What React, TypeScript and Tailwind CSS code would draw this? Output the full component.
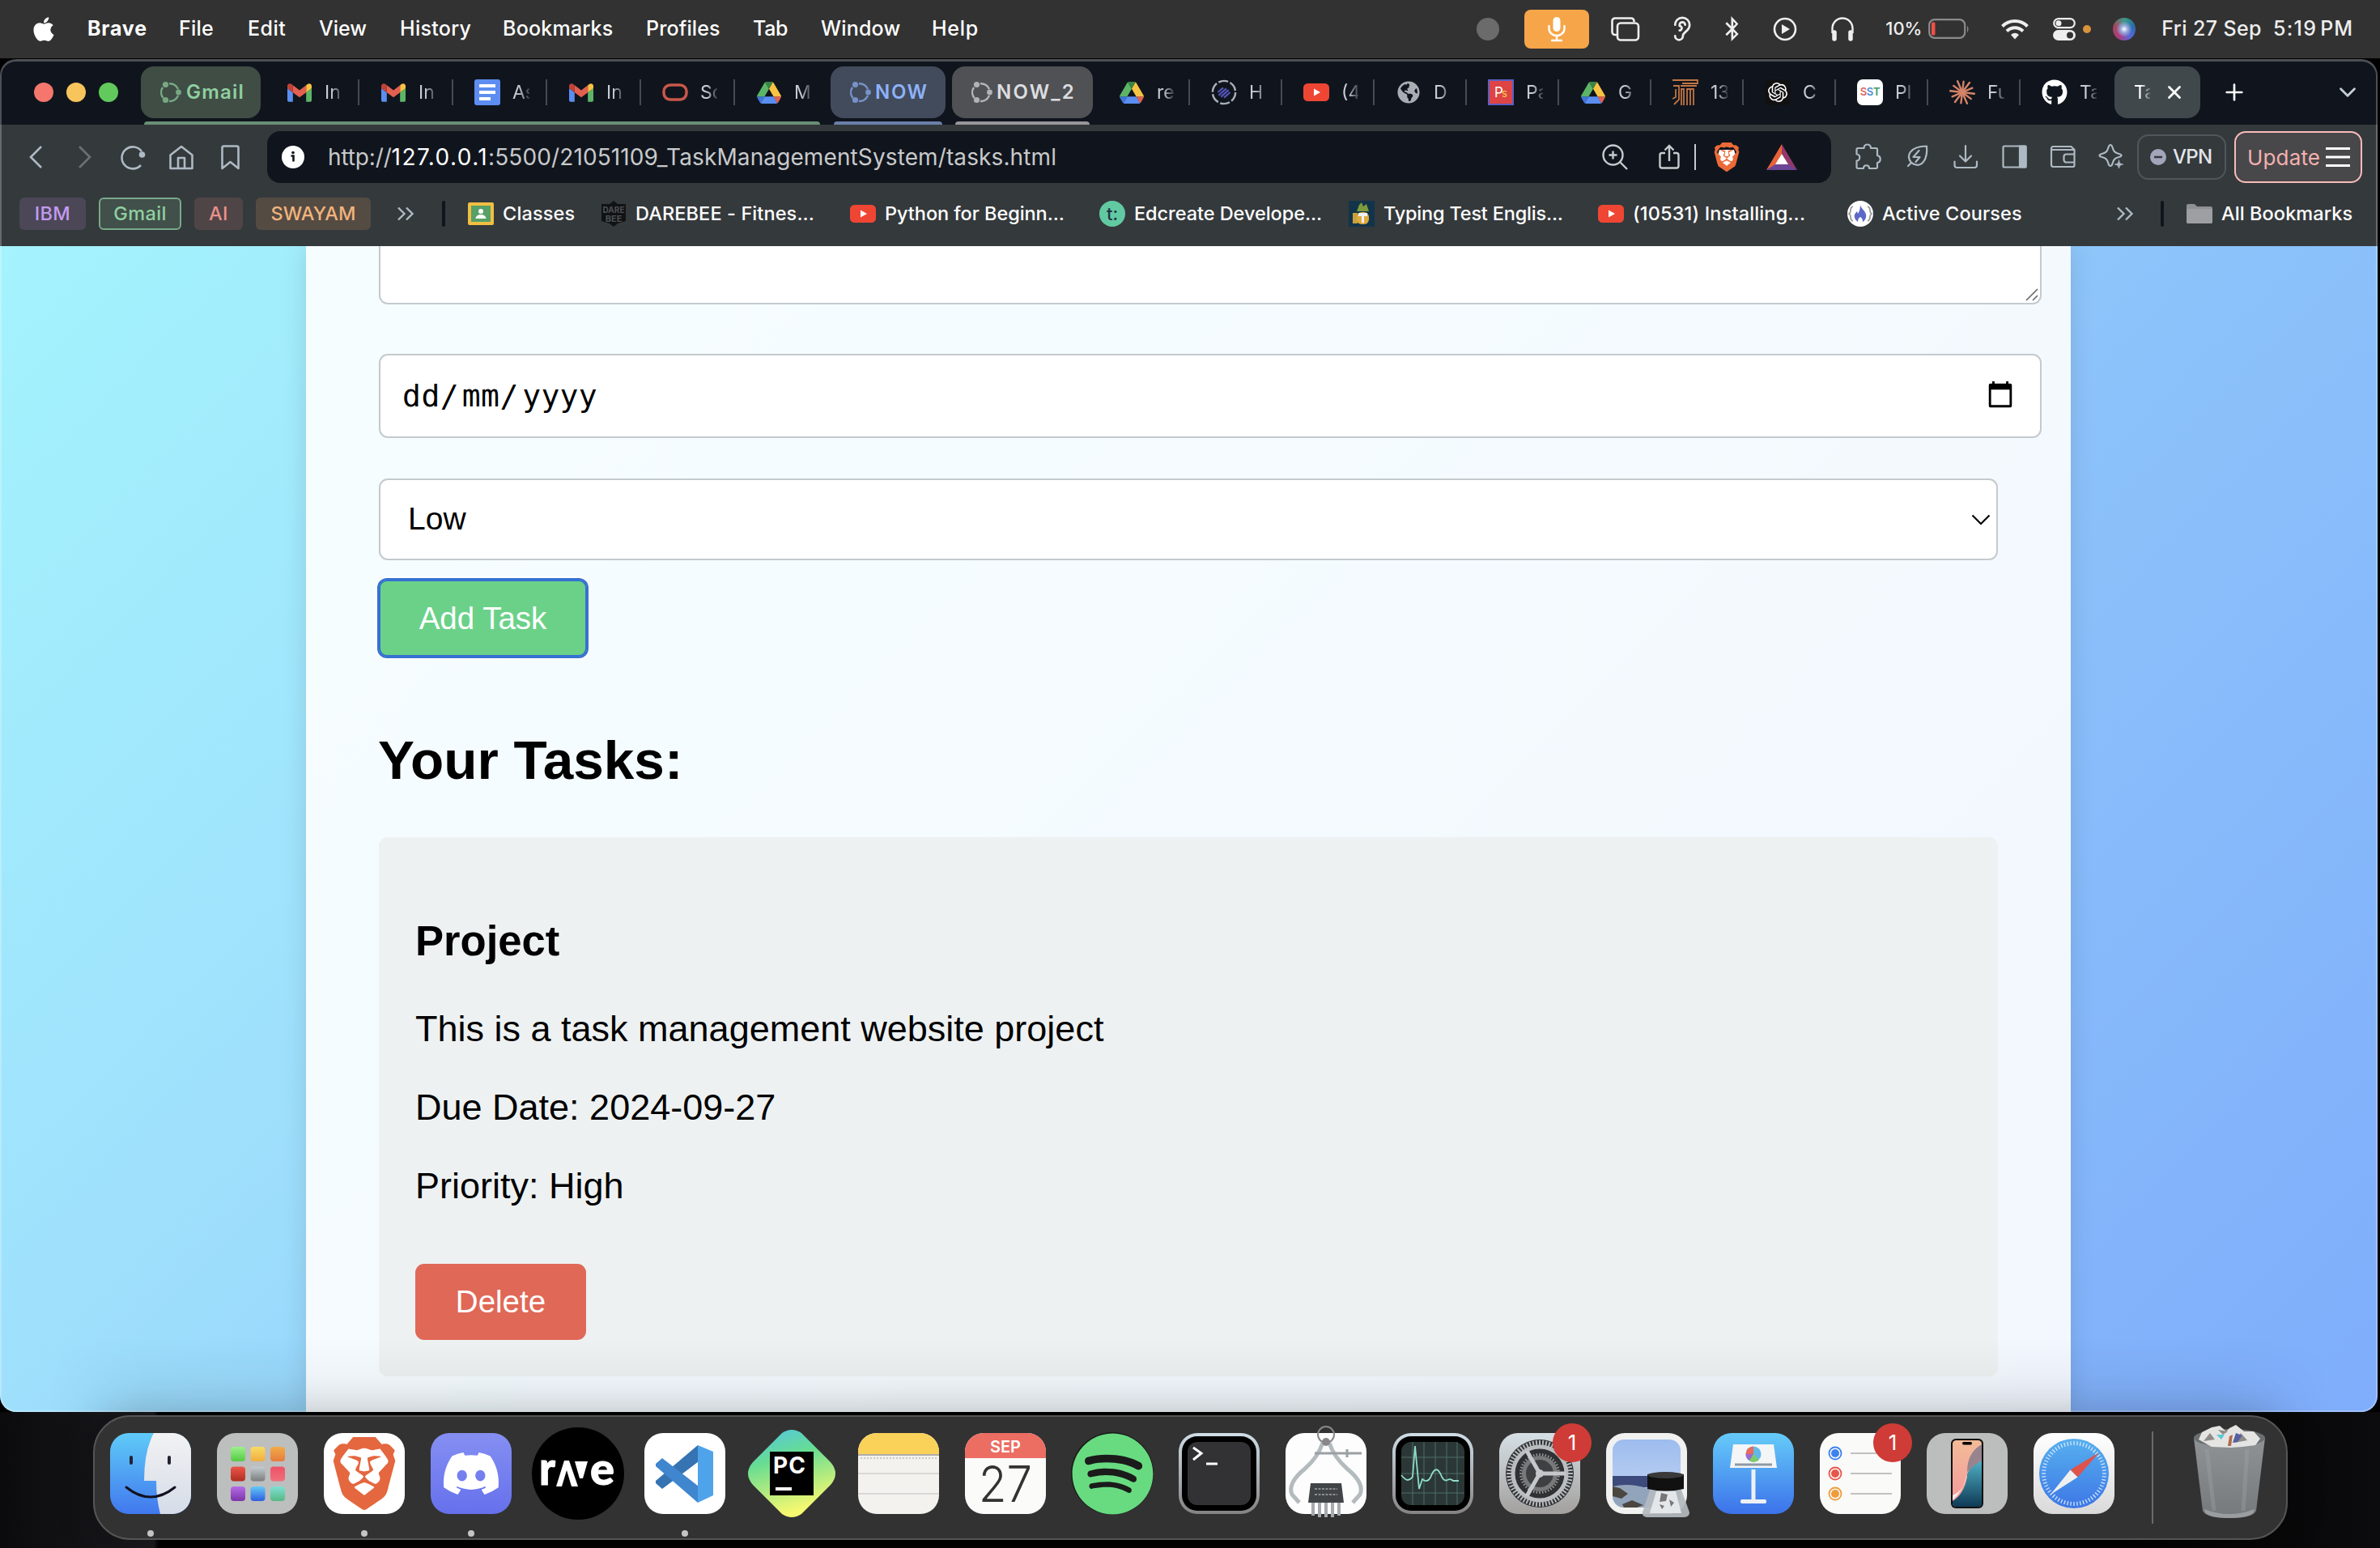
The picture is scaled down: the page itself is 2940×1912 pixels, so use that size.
import React, { useLayoutEffect, useRef, useState } from "react";
import { ChevronDown, Ear, Plus, X } from "lucide-react";
import { FaApple, FaBluetoothB, FaDiscord, FaGithub, FaGlobeAmericas, FaSpotify } from "react-icons/fa";
import { SiBrave, SiOpenai } from "react-icons/si";

/* Text whose letter spacing is adjusted so that it fills a given width. */
function Fit({ w, children, className = "" }: { w: number; children: string; className?: string }) {
  const ref = useRef<HTMLSpanElement>(null);
  const [spacing, setSpacing] = useState(0);
  useLayoutEffect(() => {
    if (ref.current) setSpacing((w - ref.current.offsetWidth) / children.length);
  }, [w, children]);
  return (
    <span ref={ref} className={`inline-block shrink-0 whitespace-pre ${className}`} style={{ letterSpacing: spacing }}>
      {children}
    </span>
  );
}

/* ---------- Menu bar ---------- */

const menus: [string, number, string][] = [
  ["File", 43, "w-[85px]"],
  ["Edit", 47, "w-[88px]"],
  ["View", 59, "w-[100px]"],
  ["History", 88, "w-[127px]"],
  ["Bookmarks", 137, "w-[177px]"],
  ["Profiles", 92, "w-[132px]"],
  ["Tab", 43, "w-[84px]"],
  ["Window", 98, "w-[137px]"],
  ["Help", 58, "w-[70px]"],
];

function MenuBar() {
  return (
    <header className="flex h-[72px] shrink-0 items-center bg-[#323232] pb-px pl-[38px] text-[25px] font-medium text-white">
      <div className="flex w-[70px] items-center"><FaApple className="h-[34px] w-[32px]" /></div>
      <div className="w-[113px] font-bold"><Fit w={74}>Brave</Fit></div>
      {menus.map(([t, w, c]) => (
        <div key={t} className={c}><Fit w={w}>{t}</Fit></div>
      ))}
      <div className="ml-auto flex items-center pr-[33px] text-[#eee]">
        <div className="w-[59px]"><div className="size-[28px] rounded-full bg-[#6b6b6b]" /></div>
        <div className="flex h-[48px] w-[80px] items-center justify-center rounded-[8px] bg-[#f6a548]">
          <svg width="24" height="32" viewBox="0 0 24 32" fill="none" stroke="#fff" strokeWidth="2.4" strokeLinecap="round">
            <rect x="7.500" y="1" width="9" height="18" rx="4.500" fill="#fff" stroke="none" />
            <path d="M2.500 12v3.500a9.5 8.500 0 0 0 19 0V12M12 24v5M6 30h12" />
          </svg>
        </div>
        <div className="flex w-[89px] justify-center">
          <svg width="36" height="30" viewBox="0 0 36 30" fill="none" stroke="#eee" strokeWidth="2.6">
            <path d="M7.500 22H5a3.500 3.500 0 0 1-3.500-3.500V5A3.500 3.500 0 0 1 5 1.500h20A3.500 3.500 0 0 1 28.500 5v1" />
            <rect x="8" y="7.500" width="26" height="21" rx="4" />
          </svg>
        </div>
        <div className="flex w-[50px] justify-center"><Ear size={33} strokeWidth={2} /></div>
        <div className="flex w-[75px] justify-center"><FaBluetoothB size={31} /></div>
        <div className="flex w-[56px] justify-center">
          <svg width="30" height="30" viewBox="0 0 30 30"><circle cx="15" cy="15" r="13" fill="none" stroke="#eee" strokeWidth="2.600" /><path d="M11 9l10 6-10 6z" fill="#eee" /></svg>
        </div>
        <div className="flex w-[96px] justify-center pr-[10px]">
          <svg width="30" height="30" viewBox="0 0 30 30" fill="none" stroke="#eee">
            <path d="M2.500 20v-6a12.500 12.500 0 0 1 25 0v6" strokeWidth="2.400" />
            <path d="M5 19v8M25 19v8" strokeWidth="5.500" strokeLinecap="round" />
          </svg>
        </div>
        <div className="w-[53px] text-[22px]"><Fit w={45}>10%</Fit></div>
        <div className="w-[89px]">
          <svg width="52" height="26" viewBox="0 0 52 26"><rect x="1.200" y="1.200" width="44" height="22.600" rx="6.500" fill="none" stroke="#8b8b8b" strokeWidth="2.200" /><rect x="4" y="4.500" width="4.500" height="16" rx="1.500" fill="#f04f45" /><path d="M48 8.500q3 4.500 0 9z" fill="#8b8b8b" /></svg>
        </div>
        <div className="w-[65px]">
          <svg width="36" height="26" viewBox="0 0 36 26" fill="none" stroke="#eee" strokeWidth="4">
            <path d="M2.500 9.500a22 22 0 0 1 31 0M8 15.500a14 14 0 0 1 20 0" /><path d="M18 25.500l-5-5.500q5-4.500 10 0z" fill="#eee" stroke="none" />
          </svg>
        </div>
        <div className="flex w-[74px] items-center gap-[9px]">
          <svg width="28" height="28" viewBox="0 0 28 28"><rect x="1.200" y="1.200" width="25.600" height="11" rx="5.500" fill="none" stroke="#eee" strokeWidth="2.200" /><circle cx="7" cy="6.700" r="3.500" fill="#eee" /><rect y="15" width="28" height="13" rx="6.500" fill="#eee" /><circle cx="21" cy="21.500" r="4" fill="#323232" /></svg>
          <div className="size-[10px] rounded-full bg-[#d8933c]" />
        </div>
        <div className="w-[60px]"><div className="size-[28px] rounded-full bg-[radial-gradient(circle_at_50%_50%,#fff_0%,#9ad_22%,transparent_50%),conic-gradient(#3a9a86,#2a6cae,#5a67d8,#b03a7a,#a4485f,#3a9a86)]" /></div>
        <Fit w={124}>Fri 27 Sep</Fit>
        <div className="w-[14px]" />
        <Fit w={54}>5:19</Fit>
        <Fit w={41} className="ml-[4px]">PM</Fit>
      </div>
    </header>
  );
}

/* ---------- Favicons ---------- */

const Gmail = () => (
  <svg width="30" height="23" viewBox="52 42 88 66">
    <path fill="#5a8ef0" d="M58 108h14V74L52 59v43c0 3.320 2.690 6 6 6" /><path fill="#5cb567" d="M120 108h14c3.320 0 6-2.690 6-6V59l-20 15" />
    <path fill="#f8c344" d="M120 48v26l20-15v-8c0-7.420-8.470-11.650-14.400-7.200" /><path fill="#e2604f" d="M72 74V48l24 18 24-18v26L96 92" />
    <path fill="#c04338" d="M52 51v8l20 15V48l-5.600-4.200c-5.940-4.450-14.400-.220-14.400 7.200" />
  </svg>
);
const Docs = () => (
  <svg width="32" height="32" viewBox="0 0 32 32"><rect width="32" height="32" rx="3" fill="#5d8df0" /><path d="M6 8h20M6 16h20M6 24h14" stroke="#fff" strokeWidth="4" /></svg>
);
const Oracle = () => (
  <svg width="32" height="24" viewBox="0 0 32 24"><rect x="2" y="3" width="28" height="18" rx="8" fill="none" stroke="#c9574a" strokeWidth="3.500" /></svg>
);
const Drive = () => (
  <svg width="30" height="27" viewBox="0 0 87.300 78">
    <path d="m6.600 66.850 3.850 6.650c.8 1.400 1.950 2.500 3.300 3.300l13.750-23.800h-27.500c0 1.550.4 3.100 1.200 4.500z" fill="#3f74dc" />
    <path d="m43.650 25-13.750-23.800c-1.350.8-2.500 1.900-3.300 3.300l-25.400 44a9.060 9.060 0 0 0-1.200 4.500h27.500z" fill="#5cb567" />
    <path d="m73.550 76.800c1.350-.8 2.500-1.900 3.300-3.300l1.600-2.750 7.650-13.250c.8-1.400 1.200-2.950 1.200-4.500h-27.500l5.850 11.500z" fill="#e2604f" />
    <path d="m43.650 25 13.750-23.800c-1.350-.8-2.900-1.200-4.500-1.200h-18.500c-1.600 0-3.150.45-4.500 1.200z" fill="#3a8544" />
    <path d="m59.800 53h-32.300l-13.750 23.800c1.350.8 2.900 1.200 4.500 1.200h50.800c1.600 0 3.150-.45 4.500-1.200z" fill="#5a8ef0" />
    <path d="m73.400 26.500-12.700-22c-.8-1.400-1.950-2.500-3.300-3.300l-13.750 23.800 16.150 28h27.450c0-1.550-.4-3.100-1.200-4.500z" fill="#f8c344" />
  </svg>
);
const YouTube = () => (
  <svg width="32" height="24" viewBox="0 0 32 24"><rect y="1" width="32" height="22" rx="5.500" fill="#ef4634" /><path d="M13 7.500l8 4.500-8 4.500z" fill="#fff" /></svg>
);
const Hashed = () => (
  <svg width="32" height="32" viewBox="0 0 34 34" fill="none"><circle cx="17" cy="17" r="15" stroke="#a9afb8" strokeWidth="2.600" strokeDasharray="12.900 2.800" /><path d="M9 17l7-6M10 21l10-9M13 23l10-9M17 24l8-7" stroke="#5355b8" strokeWidth="2.400" /></svg>
);
const Ps = () => (
  <svg width="32" height="32" viewBox="0 0 32 32"><rect x="1" y="1" width="30" height="30" fill="#df4444" stroke="#5a5fc4" strokeWidth="2" /><text x="8" y="22" fontSize="17" fontFamily="Inter" fill="#fff">P</text><text x="17" y="22" fontSize="13" fontFamily="Inter" fill="#f5d34c">s</text></svg>
);
const ItMark = () => (
  <svg width="32" height="32" viewBox="0 0 32 32" fill="none" stroke="#c07445" strokeWidth="1.800"><path d="M0 1h31v4H12M1 8h7v17l-6 6M4 12v10l-4 2M10 8h20M14 32V12h-3v20M18 32V12h8v20M22 32V12" /></svg>
);
const OpenAi = () => (
  <div className="flex size-[32px] items-center justify-center rounded-[7px] bg-[#111]"><SiOpenai size={24} color="#fff" /></div>
);
const Sst = () => (
  <div className="flex size-[32px] items-center justify-center rounded-[7px] bg-white text-[13px] font-semibold tracking-tight">
    <span className="text-[#e06666]">S</span><span className="text-[#4a8fd6]">S</span><span className="text-[#3d9a63]">T</span>
  </div>
);
const Burst = () => (
  <svg width="32" height="32" viewBox="0 0 32 32" stroke="#d58468" strokeWidth="2.400" strokeLinecap="round">
    {Array.from({ length: 12 }, (_, i) => {
      const a = (i * Math.PI) / 6 + 0.12;
      const r = i % 2 ? 13.5 : 15;
      return <line key={i} x1="16" y1="16" x2={16 + r * Math.cos(a)} y2={16 + r * Math.sin(a)} />;
    })}
  </svg>
);

/* ---------- Tab strip ---------- */

const leftTabs: [() => React.ReactElement, string][] = [
  [Gmail, "In"], [Gmail, "In"], [Docs, "As"], [Gmail, "In"], [Oracle, "So"], [Drive, "M"],
];
const rightTabs: [() => React.ReactElement, string][] = [
  [Drive, "re"], [Hashed, "H"], [YouTube, "(4"], [() => <FaGlobeAmericas size={28} color="#a9adb3" />, "D"], [Ps, "Pa"], [Drive, "G"],
  [ItMark, "13"], [OpenAi, "C"], [Sst, "Pl"], [Burst, "Fu"], [() => <FaGithub size={32} color="#fff" />, "Ta"],
];

const Label = ({ children }: { children: string }) => (
  <span className="ml-[15px] w-[21px] shrink-0 overflow-hidden text-[23px] whitespace-nowrap text-[#c9cdd2] [mask-image:linear-gradient(to_right,#000_40%,#0003)]">{children}</span>
);

const GroupRing = () => (
  <svg className="shrink-0" width="26" height="28" viewBox="0 0 26 28" fill="none" stroke="currentColor" strokeWidth="2.400" opacity="0.700">
    <path d="M3.500 21A11 11 0 0 1 3 8M11 3.200A11.500 11.500 0 0 1 22 10M22 18A11.500 11.500 0 0 1 11 25" />
    <g fill="currentColor" stroke="none"><circle cx="6.500" cy="4.500" r="3.600" /><circle cx="22.500" cy="14" r="3.400" /><circle cx="6.500" cy="23.500" r="3.600" /></g>
  </svg>
);

function TabStrip() {
  return (
    <div className="flex h-[81px] shrink-0 bg-[#10151d] pt-[3px] pl-[42px]">
      <div className="mt-[26px] flex h-[24px] w-[132px] shrink-0 gap-[16px]">
        <div className="size-[24px] rounded-full bg-[#f4766d]" />
        <div className="size-[24px] rounded-full bg-[#f8c55c]" />
        <div className="size-[24px] rounded-full bg-[#62c95c]" />
      </div>
      <div className="mr-[12px] flex w-[840px] shrink-0 flex-col">
        <div className="mt-[6px] flex h-[64px] w-[880px] items-center">
          <div className="mr-[32px] flex h-[64px] w-[148px] shrink-0 items-center rounded-[16px] bg-[#3f4d45] pl-[24px] text-[24px] font-semibold text-[#8fcf9f]">
            <GroupRing /><Fit w={72} className="ml-[6px]">Gmail</Fit>
          </div>
          {leftTabs.map(([Icon, t], i) => (
            <div key={i} className="flex w-[116px] shrink-0 items-center">
              <div className="flex w-[32px] shrink-0 justify-center"><Icon /></div>
              <Label>{t}</Label>
              {i < 5 && <div className="ml-[20px] h-[32px] w-[2px] bg-[#454b53]" />}
            </div>
          ))}
        </div>
        <div className="mt-[4px] ml-[4px] h-[4px] w-[835px] rounded-t-[4px] bg-[#6a8f76]" />
      </div>
      <div className="mr-[8px] flex w-[142px] shrink-0 flex-col items-center">
        <div className="mt-[6px] flex h-[64px] w-[142px] items-center rounded-[16px] bg-[#414b5c] pl-[24px] text-[24px] font-semibold text-[#8eb1f7]">
          <GroupRing /><Fit w={66} className="ml-[5px]">NOW</Fit>
        </div>
        <div className="mt-[4px] h-[4px] w-[134px] rounded-t-[4px] bg-[#6b7fa9]" />
      </div>
      <div className="mr-[32px] flex w-[174px] shrink-0 flex-col items-center">
        <div className="mt-[6px] flex h-[64px] w-[174px] items-center rounded-[16px] bg-[#505154] pl-[24px] text-[24px] font-semibold text-[#dcdde0]">
          <GroupRing /><Fit w={98} className="ml-[5px]">NOW_2</Fit>
        </div>
        <div className="mt-[4px] h-[4px] w-[166px] rounded-t-[4px] bg-[#98969a]" />
      </div>
      <div className="mt-[6px] flex h-[64px] items-center">
        {rightTabs.map(([Icon, t], i) => (
          <div key={i} className={i < 10 ? "flex w-[114px] items-center" : "flex w-[90px] items-center"}>
            <div className="flex w-[32px] shrink-0 justify-center"><Icon /></div>
            <Label>{t}</Label>
            {i < 10 && <div className="ml-[18px] h-[32px] w-[2px] bg-[#454b53]" />}
          </div>
        ))}
        <div className="flex h-[64px] w-[106px] items-center rounded-[16px] bg-[#40484b] pl-[24px]">
          <span className="w-[20px] overflow-hidden text-[23px] text-white [mask-image:linear-gradient(to_right,#000_40%,#0003)]">Ta</span>
          <X size={26} strokeWidth={2.6} className="ml-[17px] text-white" />
        </div>
        <Plus size={32} strokeWidth={2} className="ml-[26px] text-white" />
        <ChevronDown size={34} strokeWidth={2} className="ml-[107px] text-[#c4cdd4]" />
      </div>
    </div>
  );
}

/* ---------- Toolbar ---------- */

function Toolbar() {
  return (
    <div className="flex h-[80px] shrink-0 items-center bg-[#34393c] text-[#aebac3]">
      <svg width="330" height="40" viewBox="0 0 330 40" fill="none" stroke="#aebac3" strokeWidth="2.600">
        <path d="M51 7L38 20l13 13" />
        <path d="M98 7l13 13-13 13" stroke="#6a7175" />
        <path d="M175 13A13.500 13.500 0 1 0 174 30" /><circle cx="175.500" cy="17" r="3.800" fill="#aebac3" stroke="none" />
        <path d="M210.500 17.500L224 7l13.500 10.500V34h-27zM220 34V21h8v13" strokeLinejoin="round" />
        <path d="M274.500 34V8.500a2 2 0 0 1 2-2h16a2 2 0 0 1 2 2V34l-10-8z" strokeLinejoin="round" />
      </svg>
      <div className="flex h-[64px] w-[1932px] shrink-0 items-center rounded-[16px] bg-[#10151d] pl-[18px]">
        <svg width="28" height="28" viewBox="0 0 28 28"><circle cx="14" cy="14" r="14" fill="#fff" /><circle cx="14" cy="8.500" r="1.800" fill="#10151d" /><path d="M11.500 12.500h3v7" stroke="#10151d" strokeWidth="2.600" fill="none" /></svg>
        <div className="ml-[29px] flex text-[28px] text-[#c8c9cb]">
          <Fit w={79}>http://</Fit><Fit w={119} className="text-white">127.0.0.1</Fit><Fit w={702}>:5500/21051109_TaskManagementSystem/tasks.html</Fit>
        </div>
        <div className="ml-auto flex items-center pr-[42px]">
          <svg width="32" height="32" viewBox="0 0 32 32" fill="none" stroke="#c8cbce" strokeWidth="2.400"><circle cx="13.500" cy="13.500" r="12" /><path d="M22 22l9 9M13.500 8.500v10M8.500 13.500h10" /></svg>
          <svg className="ml-[38px]" width="26" height="32" viewBox="0 0 26 32" fill="none" stroke="#c8cbce" strokeWidth="2.400"><path d="M8 11H4a2.500 2.500 0 0 0-2.500 2.500V27A2.500 2.500 0 0 0 4 29.500h18a2.500 2.500 0 0 0 2.500-2.500V13.500A2.500 2.500 0 0 0 22 11h-4M13 21V2M7.500 7.500L13 2l5.500 5.500" /></svg>
          <div className="ml-[18px] h-[32px] w-[2px] bg-[#c8cbce]" />
          <div className="ml-[22px] flex h-[36px] w-[32px] items-center justify-center"><BraveLion size={36} color="#ec6a37" /></div>
          <svg className="ml-[33px]" width="38" height="32" viewBox="0 0 38 32"><path d="M19 0L0 32l11-6 8-14z" fill="#e8623a" /><path d="M19 0l19 32-11-6-8-14z" fill="#93396b" /><path d="M0 32h38l-11-7H11z" fill="#6c4597" /><path d="M19 12l-8 13h16z" fill="#fff" /></svg>
        </div>
      </div>
      <svg className="shrink-0" width="378" height="70" viewBox="2262 160 378 70" fill="none" stroke="currentColor" strokeWidth="2.200" strokeLinejoin="round" strokeLinecap="round">
        <path d="M2295 184h7.500c0-6 8.500-6 8.500 0h6.500a1.500 1.500 0 0 1 1.500 1.500v7.500c5 1 5 8 0 9v5.500a1.500 1.500 0 0 1-1.500 1.500h-8.500c0-5-7-5-7 0h-7a1.500 1.500 0 0 1-1.500-1.500v-8c5 0 5-8 0-8v-6a1.500 1.500 0 0 1 1.500-1.500z" />
        <path d="M2357 206l4-4c-7-9-2-20 19-20.500 1.500 16-6 29-19 20.500M2370.500 187l-7 8h8l-5 6" />
        <path d="M2428 181v19.500M2421 193.500l7 7 7-7M2414.500 200.500v4.500a3 3 0 0 0 3 3h21.500a3 3 0 0 0 3-3v-4.500" />
        <rect x="2474.500" y="181.500" width="28" height="26" rx="1.500" /><path d="M2495 181.500h7.500v26h-7.500z" fill="currentColor" />
        <path d="M2562.500 191.500v-5.500l-4-4h-22a2.500 2.500 0 0 0-2.500 2.500v20a2.500 2.500 0 0 0 2.500 2.500h24a2 2 0 0 0 2-2v-13.500h-10a3 3 0 0 0-3 3v4a3 3 0 0 0 3 3h10M2535 186h27" />
        <path d="M2607 180c1.500 0 2 1 2.500 3 1.500 5 2.500 6.500 8 8 2 .5 3 1 3 2s-1 1.500-3 2c-5.500 1.500-6.500 3-8 8-.5 2-1 3-2.500 3s-2-1-2.500-3c-1.500-5-2.500-6.500-8-8-2-.5-3-1-3-2s1-1.500 3-2c5.500-1.500 6.500-3 8-8 .5-2 1-3 2.500-3z" />
        <path d="M2617.500 199c.5 3.500 1.500 4.500 5 5-3.500.5-4.500 1.500-5 5-.5-3.500-1.500-4.500-5-5 3.500-.5 4.500-1.500 5-5z" fill="currentColor" strokeWidth="1" />
      </svg>
      <div className="flex h-[56px] w-[110px] items-center rounded-[14px] border-2 border-[#4f575c] pl-[14px] text-[24px] font-medium text-[#e3e5e8]">
        <svg width="20" height="20" viewBox="0 0 20 20"><circle cx="10" cy="10" r="10" fill="#a3a5bb" /><path d="M5 10h10" stroke="#34393c" strokeWidth="2.500" /></svg>
        <Fit w={49} className="ml-[8px]">VPN</Fit>
      </div>
      <div className="ml-[10px] flex h-[64px] w-[158px] items-center rounded-[14px] border-2 border-[#f7bcba] bg-[#48474a] pl-[14px] text-[26px] text-[#f2b1ae]">
        <Fit w={90}>Update</Fit>
        <svg className="ml-[7px]" width="30" height="24" viewBox="0 0 30 24"><path d="M0 1.500h30M0 12h30M0 22.500h30" stroke="#fff" strokeWidth="2.800" /></svg>
      </div>
    </div>
  );
}

function BraveLion({ size, color }: { size: number; color: string }) {
  return (
    <span className="relative flex">
      <svg className="absolute inset-0" width={size} height={size} viewBox="0 0 24 24"><path d="M6 6h12l1.500 5-4 9-3.500 2-3.500-2-4-9z" fill="#fff" /></svg>
      <SiBrave className="relative" size={size} color={color} />
    </span>
  );
}

/* ---------- Bookmarks bar ---------- */

const marks: { icon: React.ReactElement; label: string; w: number; cell: string }[] = [
  { icon: <svg width="32" height="28" viewBox="0 0 32 28"><rect width="32" height="28" rx="2" fill="#f0bf42" /><rect x="4" y="4" width="24" height="20" fill="#57a068" /><circle cx="16" cy="11" r="3" fill="#fff" /><path d="M9.500 20a6.500 5 0 0 1 13 0z" fill="#fff" /></svg>, label: "Classes", w: 89, cell: "w-[164px]" },
  { icon: <svg width="32" height="32" viewBox="0 0 32 32"><path d="M16 0l5 4h10v21l-10 3-5 4-5-4-10-3V4h10z" fill="#101214" /><text x="16" y="15" textAnchor="middle" fontSize="11" fontWeight="700" fontFamily="Inter" fill="#4b5054" textLength="27" lengthAdjust="spacingAndGlyphs">DARE</text><text x="16" y="26" textAnchor="middle" fontSize="11" fontWeight="700" fontFamily="Inter" fill="#4b5054">BEE</text></svg>, label: "DAREBEE - Fitnes...", w: 221, cell: "w-[308px]" },
  { icon: <YouTube />, label: "Python for Beginn...", w: 222, cell: "w-[308px]" },
  { icon: <div className="flex size-[32px] items-center justify-center rounded-full bg-[#62caa2] text-[22px] text-[#234]">t:</div>, label: "Edcreate Develope...", w: 232, cell: "w-[308px]" },
  { icon: <svg width="32" height="32" viewBox="0 0 32 32"><rect width="32" height="32" fill="#12344a" /><path d="M10 13l3-8 3-3 2 5 4-3 3 9z" fill="#7d9b3c" /><path d="M5 15h6v13H5z" fill="#c9a13a" /><rect x="10" y="14" width="15" height="15" rx="6" fill="#e0aa3e" /><path d="M12 15h11v4h-4v8h-3v-8h-4z" fill="#eef2f6" /></svg>, label: "Typing Test Englis...", w: 222, cell: "w-[308px]" },
  { icon: <YouTube />, label: "(10531) Installing...", w: 213, cell: "w-[308px]" },
  { icon: <svg width="32" height="32" viewBox="0 0 32 32"><circle cx="16" cy="16" r="16" fill="#fff" /><path d="M7 7q-3 1-3 5 0 3-2 4 2 1 2 4 0 4 3 5M25 7q3 1 3 5 0 3 2 4-2 1-2 4 0 4-3 5" fill="none" stroke="#999" strokeWidth="1.800" /><path d="M16 5c1 5 6 7 7 12 1 4-2 8-4 9 0-3-1-5-3-6-2 1-3 3-3 6-3-2-5-5-4-9 1-2 2-3 3-4l1 3c2-3 3-6 3-11z" fill="#5b68c9" /></svg>, label: "Active Courses", w: 173, cell: "w-[330px]" },
];

function Bookmarks() {
  return (
    <div className="flex h-[70px] shrink-0 items-center bg-[#34393c] pb-[10px] pl-[24px] text-[23.500px] font-medium text-white">
      <div className="flex h-[40px] w-[82px] items-center justify-center rounded-[6px] bg-[#4b4757] text-[#c39af0]"><Fit w={44}>IBM</Fit></div>
      <div className="ml-[16px] flex h-[40px] w-[102px] items-center justify-center rounded-[6px] border-2 border-[#7aa88a] bg-[#41504a] text-[#8fcf9f]"><Fit w={66}>Gmail</Fit></div>
      <div className="ml-[16px] flex h-[40px] w-[60px] items-center justify-center rounded-[6px] bg-[#504546] text-[#e8918c]"><Fit w={24}>AI</Fit></div>
      <div className="ml-[16px] flex h-[40px] w-[142px] items-center justify-center rounded-[6px] bg-[#544b43] text-[#f0b47c]"><Fit w={105}>SWAYAM</Fit></div>
      <Chevrons className="ml-[32px]" />
      <div className="ml-[34px] h-[32px] w-[4px] rounded-full bg-[#10151d]" />
      <div className="ml-[28px] flex">
        {marks.map((m) => (
          <div key={m.label} className={`flex items-center ${m.cell}`}>{m.icon}<Fit w={m.w} className="ml-[11px]">{m.label}</Fit></div>
        ))}
      </div>
      <Chevrons className="ml-[2px]" />
      <div className="ml-[33px] h-[32px] w-[4px] rounded-full bg-[#10151d]" />
      <svg className="ml-[28px]" width="32" height="26" viewBox="0 0 32 26"><path d="M0 3a2 2 0 0 1 2-2h8l3 3h17a2 2 0 0 1 2 2v17a2 2 0 0 1-2 2H2a2 2 0 0 1-2-2z" fill="#8e9093" /><path d="M0 7h32v16a2 2 0 0 1-2 2H2a2 2 0 0 1-2-2z" fill="#9d9fa2" /></svg>
      <Fit w={162} className="ml-[11px]">All Bookmarks</Fit>
    </div>
  );
}

const Chevrons = ({ className }: { className: string }) => (
  <svg className={className} width="22" height="18" viewBox="0 0 22 18" fill="none" stroke="#aebac3" strokeWidth="2.400"><path d="M2 1.500L9.500 9 2 16.500M12 1.500L19.500 9 12 16.500" /></svg>
);

/* ---------- Web page ---------- */

function Page() {
  return (
    <main className="flex h-[1440px] shrink-0 overflow-hidden bg-[linear-gradient(135deg,#a4f3fd_0%,#9edffc_33%,#8cc3fa_62%,#7fadfb_100%)] font-['Liberation_Sans',sans-serif] text-black">
      <div className="ml-[378px] w-[2180px] bg-white/90 pl-[90px] shadow-[0_0_28px_rgba(0,0,0,0.12)]">
        <div className="flex h-[72px] w-[2054px] items-end justify-end rounded-b-[11px] border-2 border-t-0 border-[#c4cacd] bg-white p-[2px]">
          <svg width="16" height="16" viewBox="0 0 16 16" stroke="#666" strokeWidth="1.600"><path d="M1 15L15 1M9 15l6-6" /></svg>
        </div>
        <div className="mt-[61px] flex h-[104px] w-[2054px] items-center justify-between rounded-[11px] border-2 border-[#c4cacd] bg-white pr-[29px] pl-[27px] font-['DejaVu_Sans_Mono',monospace] text-[38px]">
          <div className="flex">
            <Fit w={47}>dd</Fit><Fit w={27}>/</Fit><Fit w={47}>mm</Fit><Fit w={28}>/</Fit><Fit w={93}>yyyy</Fit>
          </div>
          <svg width="40" height="40" viewBox="0 0 40 40" className="pb-[2px]"><path d="M11 2v6M29 2v6" stroke="#000" strokeWidth="3" /><path d="M7 5h26a2 2 0 0 1 2 2v27a2 2 0 0 1-2 2H7a2 2 0 0 1-2-2V7a2 2 0 0 1 2-2zm1 8v20h24V13z" fill="#000" /></svg>
        </div>
        <div className="mt-[50px] flex h-[101px] w-[2000px] items-center justify-between rounded-[11px] border-2 border-[#c4cacd] bg-white pr-[7px] pl-[34px] text-[39px]">
          <span>Low</span>
          <svg width="24" height="14" viewBox="0 0 24 14" fill="none" stroke="#000" strokeWidth="2.200"><path d="M1.500 1.500L12 12 22.500 1.500" /></svg>
        </div>
        <button className="mt-[24px] flex h-[95px] w-[257px] items-center justify-center rounded-[10px] bg-[#6bd189] text-[38.500px] text-white shadow-[inset_0_0_0_2px_#3670d2,0_0_0_2px_#3670d2,0_0_0_4px_#ffffff]">Add Task</button>
        <h2 className="mt-[89px] -ml-px text-[67.500px] leading-[78px] font-bold">Your Tasks:</h2>
        <section className="mt-[56px] h-[666px] w-[2000px] rounded-[11px] bg-[#eef1f2] pt-[98px] pl-[45px] text-[45px] leading-[52px]">
          <h3 className="text-[52.600px] leading-[60px] font-bold">Project</h3>
          <p className="mt-[53px]">This is a task management website project</p>
          <p className="mt-[45px]">Due Date: 2024-09-27</p>
          <p className="mt-[45px]">Priority: High</p>
          <button className="mt-[70px] flex h-[94px] w-[211px] items-center justify-center rounded-[11px] bg-[#e06857] pb-px text-[38.500px] text-white">Delete</button>
        </section>
      </div>
    </main>
  );
}

/* ---------- Dock ---------- */

const Tile = ({ children, fill }: { children?: React.ReactNode; fill: string }) => (
  <svg width="100" height="100" viewBox="0 0 100 100" className="overflow-visible"><rect width="100" height="100" rx="23" fill={fill} />{children}</svg>
);

const launchColors = ["url(#lp0)", "url(#lp1)", "url(#lp2)", "url(#lp3)", "url(#lp4)", "url(#lp5)", "url(#lp6)", "url(#lp7)", "url(#lp8)"];

const Teeth = ({ r1, r2, n, color, w }: { r1: number; r2: number; n: number; color: string; w: number }) => (
  <g stroke={color} strokeWidth={w}>
    {Array.from({ length: n }, (_, i) => {
      const a = (i * 2 * Math.PI) / n;
      return <line key={i} x1={50 + r1 * Math.cos(a)} y1={50 + r1 * Math.sin(a)} x2={50 + r2 * Math.cos(a)} y2={50 + r2 * Math.sin(a)} />;
    })}
  </g>
);

const Badge = () => (
  <g><circle cx="90" cy="12" r="24" fill="#cf3b36" /><text x="90" y="21" textAnchor="middle" fontSize="26" fontFamily="Inter" fill="#fff">1</text></g>
);

const dockIcons: { running?: boolean; icon: React.ReactElement }[] = [
  { running: true, icon: (
    <Tile fill="url(#finderBlue)">
      <path d="M54 0h23a23 23 0 0 1 23 23v54a23 23 0 0 1-23 23H62q-5-19-5-41H42Q42 22 54 0z" fill="url(#finderGray)" />
      <path d="M26 30v7M73 30v7" stroke="#223" strokeWidth="4" strokeLinecap="round" /><path d="M20 67q30 24 60 0" fill="none" stroke="#112" strokeWidth="3" strokeLinecap="round" />
    </Tile>) },
  { icon: <Tile fill="#bdbebe">{launchColors.map((c, i) => <rect key={i} x={17 + (i % 3) * 24.5} y={17 + Math.floor(i / 3) * 24.500} width="18" height="18" rx="4" fill={c} />)}</Tile> },
  { running: true, icon: (
    <div className="flex size-[100px] items-center justify-center rounded-[23px] bg-white"><SiBrave size={90} color="#e4673f" /></div>) },
  { running: true, icon: <div className="flex size-[100px] items-center justify-center rounded-[23px] bg-gradient-to-b from-[#858ff2] to-[#6670ec]"><FaDiscord size={74} color="#fff" /></div> },
  { icon: (
    <svg width="100" height="100" viewBox="0 0 100 100" className="overflow-visible"><circle cx="50" cy="50" r="57" fill="#000" />
      <g fontWeight="900" fontFamily="Lato" fill="#fff" stroke="#fff" strokeWidth="1">
        <text x="2" y="64" fontSize="58" textLength="20" lengthAdjust="spacingAndGlyphs">r</text>
        <path d="M23 66L33 34h6l11 32h-8l-6-20-6 20z" stroke="none" /><path d="M46 35h16l-6 21h-4z" stroke="none" />
        <text x="65" y="64" fontSize="55" textLength="30" lengthAdjust="spacingAndGlyphs">e</text>
      </g>
    </svg>) },
  { running: true, icon: (
    <Tile fill="#fff"><path d="M66 15v21L22 69l-8-7v-3z" fill="#3573b3" /><path d="M22 31l44 34v21L14 41v-3z" fill="#3f86cf" /><path d="M66 15l19 8v54l-19 9z" fill="#4fa3ea" /><path d="M66 36v29L48 50z" fill="#fff" /></Tile>) },
  { icon: (
    <svg width="100" height="100" viewBox="0 0 100 100" className="overflow-visible">
      <path d="M38 0Q50-8 62 0l36 36q12 14 0 28L62 100q-12 8-24 0L2 64q-12-14 0-28z" fill="url(#pycharm)" /><rect x="23" y="23" width="54" height="54" fill="#000" />
      <text x="27" y="50" fontSize="28" fontWeight="700" fontFamily="Inter" fill="#fff" textLength="40">PC</text><path d="M30 69h20" stroke="#fff" strokeWidth="4" />
    </svg>) },
  { icon: <Tile fill="#f3f2ef"><path d="M0 26v-3A23 23 0 0 1 23 0h54a23 23 0 0 1 23 23v3z" fill="#fad25a" /><path d="M0 27h100" stroke="#b0aeaa" strokeWidth="2" /><path d="M3 31h94" stroke="#cbc9c5" strokeWidth="2" strokeDasharray="2 2" /><path d="M0 50h100M0 75h100" stroke="#d9d8d6" strokeWidth="1.800" /></Tile> },
  { icon: <Tile fill="#fbfbfa"><path d="M0 31v-8A23 23 0 0 1 23 0h54a23 23 0 0 1 23 23v8z" fill="#ec6d62" /><text x="50" y="24" textAnchor="middle" fontSize="20" fontWeight="600" fontFamily="Inter" fill="#fff" textLength="38">SEP</text><text x="50" y="85" textAnchor="middle" fontSize="62" fontWeight="300" fontFamily="Inter" fill="#333" textLength="66" lengthAdjust="spacingAndGlyphs">27</text></Tile> },
  { icon: <div className="flex size-[102px] shrink-0 items-center justify-center rounded-full bg-[#1b1b1b]"><FaSpotify size={103} color="#68db80" className="shrink-0" /></div> },
  { icon: <Tile fill="url(#steel)"><rect x="4" y="4" width="92" height="92" rx="19" fill="#000" /><rect x="11" y="11" width="78" height="78" rx="12" fill="#323234" /><path d="M18 18l10 7-10 8M34 38h14" stroke="#fff" strokeWidth="3" fill="none" /></Tile> },
  { icon: (
    <Tile fill="#fdfdfd">
      <circle cx="50" cy="2" r="10" fill="none" stroke="#888" strokeWidth="2" />
      <path d="M46 12Q40 30 24 44 2 62 8 76l9 10M54 12q6 18 22 32 22 18 16 32l-9 10" fill="none" stroke="#b4bbbe" strokeWidth="5" />
      <path d="M36 25h58M76 20v10" stroke="#9aa0a3" strokeWidth="3" /><circle cx="50" cy="11" r="5" fill="#888" />
      <path d="M31 62h38l3 24H28z" fill="#414446" /><path d="M36 69h28M36 76h28" stroke="#8a8d90" strokeWidth="2" strokeDasharray="3 1.500" /><path d="M34 86v16M42 86v18M50 86v18M58 86v18M66 86v16" stroke="#a5aaad" strokeWidth="4" />
    </Tile>) },
  { icon: (
    <Tile fill="url(#steel)"><rect x="4" y="4" width="92" height="92" rx="19" fill="#000" /><rect x="11" y="11" width="78" height="78" rx="12" fill="#2b3736" />
      <path d="M11 30h78M11 50h78M11 74h78M25 11v78M39 11v78M53 11v78M67 11v78M80 11v78" stroke="#4c6f69" strokeWidth="1" />
      <path d="M11 52q5 6 8 6t6-4l3-38 5 53 4-12q6 5 10-2 7-19 14-1 3 6 7 4t7 1h7" fill="none" stroke="#8fdcc9" strokeWidth="1.800" /></Tile>) },
  { icon: (
    <Tile fill="url(#gearBg)"><circle cx="50" cy="50" r="42" fill="#2f3133" /><Teeth r1={35} r2={41} n={60} color="#b5b9bb" w={2} /><circle cx="50" cy="50" r="33" fill="none" stroke="#b9bdbf" strokeWidth="5" /><circle cx="50" cy="50" r="22" fill="#77797b" /><circle cx="50" cy="50" r="17" fill="#3e4042" /><Teeth r1={22} r2={25} n={40} color="#999" w={1.5} />
      <path d="M50 50h32M50 50L34 22M50 50L34 78" stroke="#c4c8ca" strokeWidth="5" /><circle cx="50" cy="50" r="5" fill="#c4c8ca" /><Badge /></Tile>) },
  { icon: (
    <Tile fill="#f1f1f0"><rect x="8" y="8" width="84" height="84" rx="14" fill="url(#sky)" /><path d="M8 53h84v14H8z" fill="#3c4a7c" /><path d="M8 66q20-5 42 2t42-2v12a14 14 0 0 1-14 14H22A14 14 0 0 1 8 78z" fill="#91a4bb" /><path d="M8 66l9 2 10 7-8 6-11-3zM20 88l12-5 14 6-8 3H22z" fill="#4b4640" />
      <path d="M54 70h39l10 28q0 6-8 6H52q-8 0-7-6z" fill="#b4babf" opacity="0.920" /><path d="M62 72h24l7 27H54z" fill="#e4e7e9" /><path d="M68 74l8 2-2 8-8 1zM78 82l6 4-4 5zM66 88l6 2-3 4z" fill="#777" /><path d="M51 51q22-5 45 0v18q-22 5-45 0z" fill="#111" /><ellipse cx="73.500" cy="52" rx="22" ry="4" fill="#3a3a3a" /></Tile>) },
  { icon: (
    <Tile fill="url(#keynote)"><path d="M25 14h50l4 29H21z" fill="#f4f5f6" /><path d="M27 39h46" stroke="#8d99a5" strokeWidth="3" /><circle cx="50" cy="26" r="9.500" fill="#62b8e6" /><path d="M50 26v-9.500a9.500 9.500 0 0 0-9.500 9.500z" fill="#ea6a5c" /><path d="M50 26h-9.500a9.500 9.500 0 0 0 5 8.200z" fill="#9b6bd0" /><path d="M50 26l-5 8.200a9.500 9.500 0 0 0 12-1z" fill="#7ccb6a" /><path d="M50 45v38" stroke="#eef1f4" strokeWidth="5" /><rect x="34" y="82" width="32" height="5" rx="2" fill="#eef1f4" /></Tile>) },
  { icon: (
    <Tile fill="#fafaf8">{["#3d82f0", "#e8564a", "#ee9c3c"].map((c, i) => (<g key={c}><circle cx="19" cy={25 + i * 25} r="7.500" fill="none" stroke={c} strokeWidth="1.800" /><circle cx="19" cy={25 + i * 25} r="5" fill={c} /><path d={`M38 ${25 + i * 25}h51`} stroke="#c1c1c3" strokeWidth="2" /></g>))}<Badge /></Tile>) },
  { icon: (
    <Tile fill="#bcbdbd"><rect x="30" y="7" width="40" height="86" rx="6" fill="#111" /><rect x="32" y="9" width="36" height="82" rx="4.500" fill="url(#phonePink)" /><path d="M68 14Q50 24 50 48l18-14z" fill="#97848e" /><path d="M68 34Q48 46 50 54 46 76 32 84v3a4.500 4.500 0 0 0 4.500 4H64a4 4 0 0 0 4-4z" fill="url(#phoneBlue)" /><path d="M50 50q-2 20-18 27v6q14-12 18-33z" fill="#f7eeee" /><rect x="44" y="11" width="12" height="3.500" rx="1.700" fill="#000" /></Tile>) },
  { icon: (
    <Tile fill="url(#safariBg)"><circle cx="50" cy="50" r="43" fill="url(#safariBlue)" /><Teeth r1={35} r2={40} n={60} color="#d3e6fb" w={1.300} /><path d="M81 24L45.500 45.500l9 9z" fill="#e0524a" /><path d="M21 76l24.500-30.500 9 9z" fill="#f0f0f0" /></Tile>) },
];

function Defs() {
  const g = (id: string, a: string, b: string) => (
    <linearGradient id={id} x1="0" y1="0" x2="0" y2="1"><stop stopColor={a} /><stop offset="1" stopColor={b} /></linearGradient>
  );
  return (
    <svg width="0" height="0" className="absolute">
      <defs>
        {g("finderBlue", "#5fcbf8", "#4178ee")}{g("finderGray", "#f2f2f3", "#d5dce8")}{g("steel", "#cfdde6", "#858284")}{g("gearBg", "#d5dfe5", "#a3a09e")}
        {g("sky", "#9dbcee", "#c5d7f2")}{g("keynote", "#65cbf9", "#3c72ea")}{g("phonePink", "#f3bb98", "#f4989c")}{g("phoneBlue", "#4fb0c4", "#0f3a56")}
        {g("safariBg", "#ffffff", "#d9d9da")}{g("safariBlue", "#57b0ef", "#3d77e6")}{g("bin", "#8f9395", "#75797b")}
        {g("lp0", "#9bf28a", "#55c944")}{g("lp1", "#f8dc62", "#f1ac40")}{g("lp2", "#f2ac48", "#e77b3c")}
        {g("lp3", "#ec5648", "#b02e22")}{g("lp4", "#c3ccd1", "#7b7d7e")}{g("lp5", "#ee5268", "#f0707a")}
        {g("lp6", "#b56be6", "#7a35a8")}{g("lp7", "#63c9f7", "#2e5fe0")}{g("lp8", "#80e0d4", "#55b884")}
        <linearGradient id="pycharm" x1="0" y1="0" x2="0.300" y2="1"><stop stopColor="#52c4e8" /><stop offset="0.400" stopColor="#67dd92" /><stop offset="1" stopColor="#f6f870" /></linearGradient>
      </defs>
    </svg>
  );
}

function Dock() {
  return (
    <div className="ml-[115px] flex h-[154px] w-[2711px] rounded-[46px] border-2 border-[#555] bg-[#323232] pl-[3px] shadow-[0_0_50px_rgba(0,0,0,0.200)]">
      {dockIcons.map((d, i) => (
        <div key={i} className="flex w-[132px] flex-col items-center pt-[20px]">
          <div className="flex size-[100px] items-center justify-center">{d.icon}</div>
          {d.running && <div className="mt-[20px] size-[8px] rounded-full bg-[#c4c4c4]" />}
        </div>
      ))}
      <div className="mt-[18px] ml-[30px] h-[114px] w-[2px] bg-[#6a6a6a]" />
      <svg className="mt-[10px] ml-[50px]" width="88" height="116" viewBox="0 0 88 116">
        <path d="M0 16q44 16 88 0l-11 90q-4 9-33 9t-33-9z" fill="url(#bin)" /><ellipse cx="44" cy="16" rx="44" ry="11" fill="#6b6f71" />
        <path d="M6 18l4-9 12-6 10-2 8 7 4-4 8-4 10 8 12 0 8 9-6 8-16 2-14 1-24-1z" fill="#e4e4e3" />
        <path d="M12 20l8-10 6 8zM50 22l8-12 8 9zM30 6l6 6 6-4z" fill="#8f8b88" /><path d="M28 12h10l-4 6z" fill="#58c9d6" /><path d="M52 10l8 3-6 8-6 1z" fill="#5560a0" /><path d="M44 14l4-2-2 14h-4z" fill="#b06a4a" />
        <path d="M16 30l9 76M66 30l-5 76" stroke="#a2a6a8" strokeWidth="5" opacity="0.350" /><path d="M13 104q31 12 62 0l-1 4q-5 7-30 7t-30-7z" fill="#a8acaf" opacity="0.700" />
      </svg>
    </div>
  );
}

export default function App() {
  return (
    <div className="flex h-[1912px] w-[2940px] flex-col overflow-hidden bg-black font-['Inter',sans-serif]">
      <Defs />
      <MenuBar />
      <div className="relative mt-px flex h-[1671px] w-[2937px] shrink-0 flex-col overflow-hidden rounded-[20px] bg-[#34393c]">
        <TabStrip />
        <Toolbar />
        <Bookmarks />
        <Page />
        <div className="pointer-events-none absolute inset-0 rounded-[20px] border-2 border-t-[3px] border-white/25" />
      </div>
      <div className="relative h-[168px] bg-[linear-gradient(to_right,#0b0b0d,#1a1a1e_190px,#000_196px,#000_2600px,#0c0c0e)] pt-[4px]">
        <div className="pointer-events-none absolute inset-x-[60px] -top-[90px] h-[90px] bg-gradient-to-b from-transparent to-black/6 [mask-image:linear-gradient(to_right,transparent,#000_120px,#000_2680px,transparent)]" />
        <Dock />
      </div>
    </div>
  );
}
